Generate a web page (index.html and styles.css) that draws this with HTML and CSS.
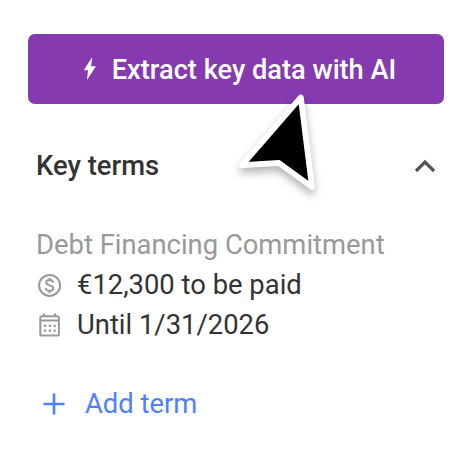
FILE: index.html
```html
<!DOCTYPE html>
<html lang="en">
<head>
  <meta charset="UTF-8">
  <meta name="viewport" content="width=device-width, initial-scale=1">
  <title>Key terms</title>
  <link rel="stylesheet" href="styles.css">
</head>
<body>

  <div class="panel">
    <button class="extract-btn" type="button">
      <svg class="bolt" width="14" height="24" viewBox="0 0 14 24">
        <path d="M8.5 1 L0.8 13.2 H5 L4 23 L13 9.2 H8 L9.3 1 Z" fill="currentColor"/>
      </svg>
      <span>Extract key data with AI</span>
    </button>

    <div class="section-header">
      <h2>Key terms</h2>
      <svg class="chevron" width="22" height="14" viewBox="0 0 22 14">
        <path d="M2 12 L11 3 L20 12" fill="none" stroke="currentColor" stroke-width="3.2"/>
      </svg>
    </div>

    <div class="term">
      <h3>Debt Financing Commitment</h3>
      <div class="term-row">
        <svg width="26" height="26" viewBox="0 0 26 26" fill="none" stroke="currentColor">
          <circle cx="13.6" cy="13.4" r="10.5" stroke-width="2"/>
          <path transform="translate(.6 .4)" d="M16.6 10.2 C16.3 8.5 15 7.6 13 7.6 C10.9 7.6 9.6 8.6 9.6 10.1 C9.6 11.8 11 12.4 13 12.9 C15.2 13.5 16.7 14.2 16.7 15.9 C16.7 17.5 15.3 18.5 13.1 18.5 C10.9 18.5 9.4 17.5 9.2 15.6 M13 5.3 V7.8 M13 18.3 V20.8" stroke-width="1.9"/>
        </svg>
        <span>€12,300 to be paid</span>
      </div>
      <div class="term-row">
        <svg width="26" height="26" viewBox="0 0 26 26" fill="none" stroke="currentColor">
          <rect x="4.3" y="4.2" width="18.6" height="19.4" rx="1.6" stroke-width="2"/>
          <path d="M4.3 8.5 H22.9" stroke-width="2"/>
          <path d="M8 1.6 V4.5 M19 1.6 V4.5" stroke-width="2.2"/>
          <path d="M8 13.8 H20 M8 18.6 H20" stroke-width="2.2" stroke-dasharray="2.2 2.6"/>
        </svg>
        <span>Until 1/31/2026</span>
      </div>
    </div>

    <button class="add-btn" type="button">
      <svg width="22" height="22" viewBox="0 0 22 22">
        <path d="M11 0.5 V21.5 M0.5 11 H21.5" stroke="currentColor" stroke-width="2.6"/>
      </svg>
      <span>Add term</span>
    </button>
  </div>

  <svg class="cursor" width="100" height="120" viewBox="0 0 100 120">
    <path d="M70.8 12.3 L12 80.2 L49 78 L82 102 Z" fill="#000" stroke="#fff" stroke-width="5.8" stroke-linejoin="round"/>
  </svg>

</body>
</html>
```

FILE: styles.css
```css
* {
  box-sizing: border-box;
}

body {
  margin: 0;
  background: #fff;
  color: #333;
  font-family: Roboto, "Liberation Sans", sans-serif;
  font-size: 27.4px;
}

.panel {
  padding: 34px 28px;
}

button {
  border: 0;
  font: inherit;
}

.extract-btn {
  display: flex;
  align-items: center;
  justify-content: center;
  gap: 15px;
  width: 100%;
  height: 70px;
  padding: 0 0 0 7px;
  border-radius: 7px;
  background: #863ab0;
  color: #fff;
  font-size: 27.2px;
  font-weight: 500;
}

.extract-btn span {
  padding-top: 2px;
}

.section-header {
  display: flex;
  align-items: center;
  justify-content: space-between;
  height: 40px;
  margin-top: 42px;
  padding: 0 8px;
}

.section-header h2 {
  margin: 0;
  font-size: 27.4px;
  font-weight: 500;
}

.chevron {
  color: #555;
}

.term {
  margin-top: 39px;
  padding: 0 8px;
  line-height: 40px;
}

.term h3 {
  margin: 0;
  color: #999;
  font-size: 27.4px;
  font-weight: 400;
}

.term-row {
  display: flex;
  align-items: center;
  gap: 15px;
  height: 40px;
}

.term-row svg {
  color: #999;
}

.add-btn {
  display: flex;
  align-items: center;
  gap: 20px;
  height: 40px;
  margin-top: 39px;
  padding: 0 15px;
  background: none;
  color: #4f80ff;
}

/* pointer lies over the button */
.cursor {
  position: absolute;
  top: 85px;
  left: 230px;
  filter: drop-shadow(0 5px 4px rgba(0, 0, 0, 0.3));
}
```
